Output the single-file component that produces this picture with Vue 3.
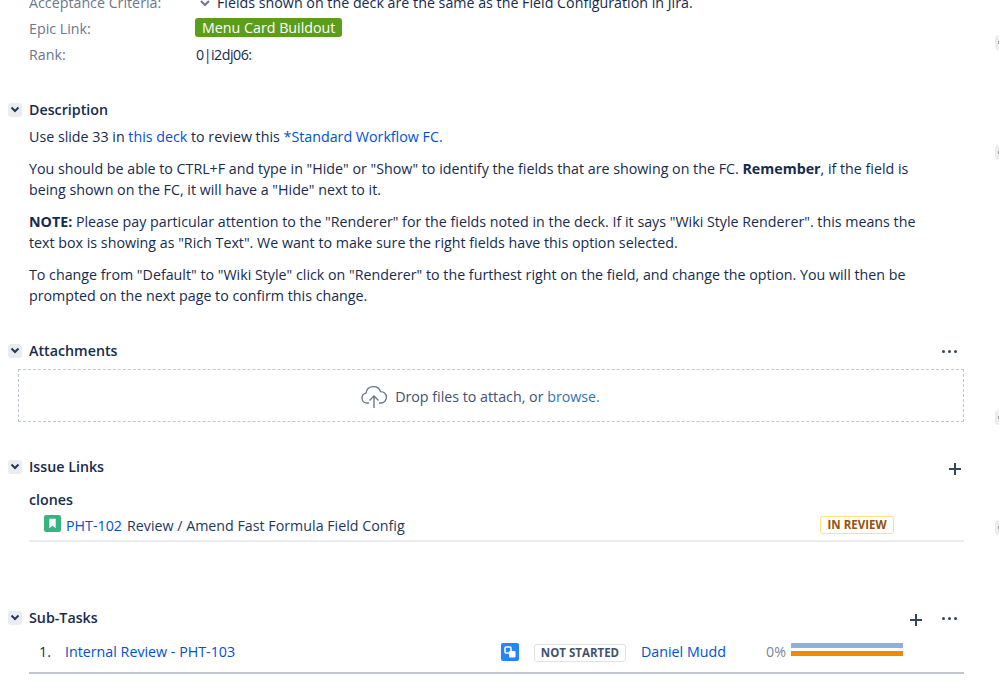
<script setup>
const fields = [
  { label: 'Epic Link:', epic: 'Menu Card Buildout' },
  { label: 'Rank:', value: '0|i2dj06:' }
]
const handles = [43, 153, 418, 528]
</script>

<template>
  <div class="page">
    <section class="fields">
      <div class="field">
        <span class="label">Acceptance Criteria:</span>
        <span class="value criteria">
          <svg class="criteria-chevron" width="12" height="8" viewBox="0 0 12 8"><path d="M2 2l4 4 4-4" fill="none" stroke="#6b778c" stroke-width="2" /></svg>
          Fields shown on the deck are the same as the Field Configuration in Jira.
        </span>
      </div>
      <div v-for="f in fields" :key="f.label" class="field">
        <span class="label">{{ f.label }}</span>
        <span v-if="f.epic" class="value"><span class="epic">{{ f.epic }}</span></span>
        <span v-else class="value rank">{{ f.value }}</span>
      </div>
    </section>

    <section class="description">
      <header class="head">
        <span class="toggle"><svg width="10" height="7" viewBox="0 0 10 7"><path d="M1.5 1.5L5 5l3.5-3.5" fill="none" stroke="#253858" stroke-width="2" /></svg></span>
        <h2>Description</h2>
      </header>
      <div class="body">
        <p>Use slide 33 in <a>this deck</a> to review this <a>*Standard Workflow FC.</a></p>
        <p>You should be able to CTRL+F and type in "Hide" or "Show" to identify the fields that are showing on the FC. <b>Remember</b>, if the field is being shown on the FC, it will have a "Hide" next to it.</p>
        <p><b>NOTE:</b> Please pay particular attention to the "Renderer" for the fields noted in the deck. If it says "Wiki Style Renderer". this means the text box is showing as "Rich Text". We want to make sure the right fields have this option selected.</p>
        <p>To change from "Default" to "Wiki Style" click on "Renderer" to the furthest right on the field, and change the option. You will then be prompted on the next page to confirm this change.</p>
      </div>
    </section>

    <section class="attachments">
      <header class="head">
        <span class="toggle"><svg width="10" height="7" viewBox="0 0 10 7"><path d="M1.5 1.5L5 5l3.5-3.5" fill="none" stroke="#253858" stroke-width="2" /></svg></span>
        <h2>Attachments</h2>
        <span class="dots"><i></i><i></i><i></i></span>
      </header>
      <div class="drop">
        <svg width="28" height="24" viewBox="0 0 28 24" fill="none" stroke="#6b778c" stroke-width="1.4">
          <path d="M9 18H7a5 5 0 0 1-1-9.900A7.500 7.500 0 0 1 20.500 6.600 5.700 5.700 0 0 1 21 18h-2" />
          <path d="M14 23V11M9.500 15.500L14 11l4.500 4.500" />
        </svg>
        <span>Drop files to attach, or <a class="browse">browse.</a></span>
      </div>
    </section>

    <section class="links">
      <header class="head">
        <span class="toggle"><svg width="10" height="7" viewBox="0 0 10 7"><path d="M1.500 1.500L5 5l3.500-3.500" fill="none" stroke="#253858" stroke-width="2" /></svg></span>
        <h2>Issue Links</h2>
        <svg class="plus" width="14" height="14" viewBox="0 0 14 14"><path d="M7 1v12M1 7h12" stroke="#344563" stroke-width="2" /></svg>
      </header>
      <div class="link-type">clones</div>
      <div class="link-row">
        <span class="story"><svg width="17" height="17" viewBox="0 0 16 16"><rect width="16" height="16" rx="2" fill="#36b37e" /><path d="M5 3.500h6v9L8 10l-3 2.500z" fill="#fff" /></svg></span>
        <a>PHT-102</a>
        <span class="summary">Review / Amend Fast Formula Field Config</span>
        <span class="lozenge review">IN REVIEW</span>
      </div>
    </section>

    <section class="subtasks">
      <header class="head">
        <span class="toggle"><svg width="10" height="7" viewBox="0 0 10 7"><path d="M1.500 1.500L5 5l3.500-3.500" fill="none" stroke="#253858" stroke-width="2" /></svg></span>
        <h2>Sub-Tasks</h2>
        <svg class="plus sub" width="14" height="14" viewBox="0 0 14 14"><path d="M7 1v12M1 7h12" stroke="#344563" stroke-width="2" /></svg>
        <span class="dots"><i></i><i></i><i></i></span>
      </header>
      <div class="task-row">
        <span class="num">1.</span>
        <a class="task-name">Internal Review - PHT-103</a>
        <span class="task-icon"><svg width="18" height="18" viewBox="0 0 18 18"><rect width="18" height="18" rx="2" fill="#2684ff" /><rect x="4" y="4" width="6" height="6" rx="1" fill="none" stroke="#fff" stroke-width="1.500" /><rect x="8" y="8" width="6.500" height="6.500" rx="1" fill="#fff" /></svg></span>
        <span class="lozenge todo">NOT STARTED</span>
        <a class="assignee">Daniel Mudd</a>
        <span class="percent">0%</span>
        <span class="bars"><i class="bar-blue"></i><i class="bar-orange"></i></span>
      </div>
    </section>

    <span v-for="y in handles" :key="y" class="handle" :style="{ top: y - 8 + 'px' }"></span>
  </div>
</template>

<style scoped>
.page {
  position: relative;
  width: 999px;
  height: 699px;
  overflow: hidden;
  box-sizing: border-box;
  padding: 0 35px 0 8px;
  background: #fff;
  color: #172b4d;
  font-family: "Open Sans", "Noto Sans", sans-serif;
  font-size: 14.25px;
  line-height: 21px;
}

.fields {
  margin-top: -8px;
  padding-left: 21px;
  display: flex;
  flex-direction: column;
  gap: 5px;
}

.field {
  display: flex;
  height: 21px;
}

.label {
  width: 167px;
  color: #6b778c;
}

.value {
  display: flex;
  align-items: center;
}

.rank {
  letter-spacing: -0.5px;
}

.criteria-chevron {
  margin: 0 6px 0 3px;
}

.epic {
  display: block;
  background: #5a9e1c;
  color: #fff;
  border-radius: 3px;
  padding: 0 7px;
  margin: 0 0 3px -1px;
  height: 19px;
  line-height: 20px;
}

.description {
  margin-top: 34px;
}

.head {
  display: flex;
  align-items: center;
  height: 21px;
}

.toggle {
  width: 14px;
  height: 14px;
  background: #ebecf0;
  border-radius: 3px;
  display: flex;
  align-items: center;
  justify-content: center;
  margin-right: 7px;
}

h2 {
  margin: 0;
  font-size: 14.25px;
  font-weight: 600;
  color: #172b4d;
}

.body {
  padding-left: 21px;
  margin-top: 6px;
  width: 892px;
}

p {
  margin: 0 0 11px;
}

a {
  color: #0052cc;
}

b {
  font-weight: 700;
}

.attachments {
  margin-top: 34px;
}

.dots {
  margin: 2px 7px 0 auto;
  display: flex;
  gap: 3px;
}

.subtasks .dots {
  margin-left: 0;
}

.dots i {
  width: 3px;
  height: 3px;
  border-radius: 50%;
  background: #344563;
}

.drop {
  margin: 8px 0 0 10px;
  height: 53px;
  box-sizing: border-box;
  border: 1px dashed #c1c7d0;
  padding: 2px 22px 0 0;
  display: flex;
  align-items: center;
  justify-content: center;
  gap: 7px;
  color: #42526e;
}

.browse {
  color: #3572b0;
}

.links {
  margin-top: 34px;
}

.plus {
  margin: 4px 2px 0 auto;
}

.link-type {
  padding-left: 21px;
  margin-top: 12px;
  font-weight: 600;
}

.link-row {
  margin-left: 21px;
  margin-top: 5px;
  height: 27px;
  display: flex;
  align-items: center;
  border-bottom: 2px solid #ebecf0;
  padding-bottom: 5px;
  box-sizing: border-box;
}

.story {
  margin: 0 5px 0 15px;
  display: flex;
  align-self: flex-start;
}

.summary {
  margin-left: 5px;
  color: #253858;
}

.lozenge {
  font-size: 11.5px;
  font-weight: 700;
  line-height: 16px;
  height: 18px;
  box-sizing: border-box;
  border-radius: 3px;
  text-align: center;
  white-space: nowrap;
}

.review {
  margin-left: auto;
  margin-right: 70px;
  width: 74px;
  color: #974f0c;
  border: 1px solid #ffe380;
}

.subtasks {
  margin-top: 65px;
}

.plus.sub {
  margin: 4px 19px 0 auto;
}

.task-row {
  margin: 13px 0 0 21px;
  height: 33px;
  display: flex;
  align-items: flex-start;
  box-sizing: border-box;
  border-bottom: 2px solid #c1c7d0;
}

.num {
  width: 36px;
  padding-left: 10px;
  box-sizing: border-box;
}

.task-name {
  width: 436px;
}

.task-icon {
  margin-top: 2px;
  width: 33px;
  display: flex;
}

.todo {
  margin-top: 3px;
  width: 92px;
  border: 1px solid #dfe1e6;
  color: #42526e;
}

.assignee {
  margin-left: 15px;
  width: 125px;
}

.percent {
  color: #7a869a;
  width: 25px;
}

.bars {
  margin-top: 2px;
  width: 112px;
  display: flex;
  flex-direction: column;
  gap: 3px;
}

.bars i {
  display: block;
  height: 5px;
}

.bar-blue {
  background: #8eb0d8;
}

.bar-orange {
  background: #ee8c00;
}

.handle {
  position: absolute;
  left: 995px;
  width: 8px;
  height: 15px;
  background: #ebecf0;
  border-radius: 4px 0 0 4px;
}

.handle::after {
  content: "";
  position: absolute;
  left: 3px;
  top: 6px;
  width: 1px;
  height: 3px;
  background: #97a0af;
}
</style>
